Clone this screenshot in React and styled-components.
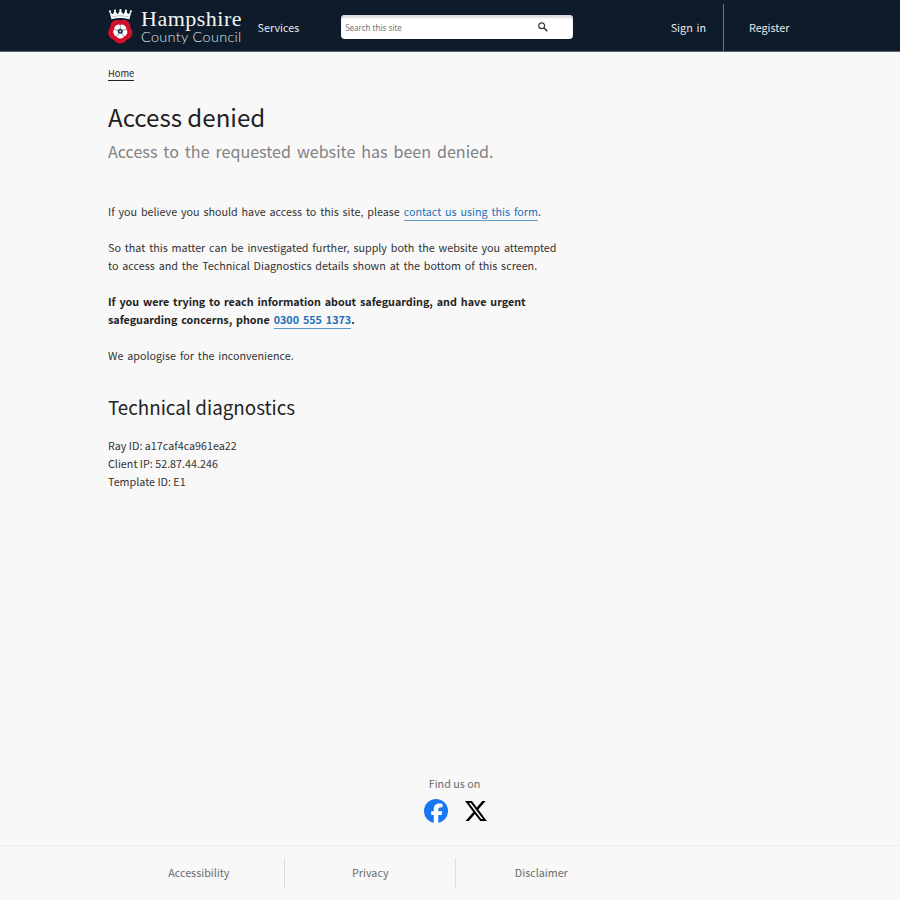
import React from 'react';
import styled, { createGlobalStyle } from 'styled-components';

const GlobalStyle = createGlobalStyle`
  *, *::before, *::after {
    box-sizing: border-box;
  }

  body {
    margin: 0;
    background: #f8f8f8;
    color: #333;
    font-family: 'Noto Sans CJK JP', 'Noto Sans', sans-serif;
    font-size: 10.75px;
    line-height: 18px;
  }

  a {
    color: inherit;
    text-decoration: none;
  }
`;

const Page = styled.div`
  display: flex;
  flex-direction: column;
  height: 900px;
`;

const Header = styled.header`
  display: flex;
  height: 52px;
  padding: 4px 85px 0 108px;
  background: #0e1b2a;
  border-bottom: 1px solid #55606b;
  color: #e8eaec;
`;

const Brand = styled.a`
  display: flex;
  width: 149.6px;
  padding-top: 5px;

  svg {
    display: block;
    width: 25px;
    height: 36px;
    margin-right: 8px;
  }
`;

const BrandName = styled.span`
  display: flex;
  flex-direction: column;
  white-space: nowrap;
`;

const BrandTop = styled.span`
  font-family: 'Liberation Serif', serif;
  font-size: 22px;
  line-height: 20px;
  letter-spacing: 0.5px;
  color: #f4f4f4;
`;

const BrandBottom = styled.span`
  font-family: Lato, sans-serif;
  font-weight: 300;
  font-size: 14.5px;
  line-height: 15px;
  letter-spacing: 0.3px;
  color: #dfe3e6;
`;

const NavLink = styled.a`
  padding-top: 15px;
  line-height: 18px;
  word-spacing: 1.4px;
`;

const Search = styled.form`
  display: flex;
  align-items: center;
  width: 232px;
  height: 24px;
  margin: 11px 0 0 42px;
  padding: 0 25px 0 4px;
  background: #fff;
  border-radius: 4px;
  box-shadow: inset 0 3px 2px #dfdbe0;

  input {
    flex: 1;
    min-width: 0;
    padding: 0;
    border: 0;
    outline: 0;
    background: transparent;
    font-family: 'Noto Sans', sans-serif;
    font-size: 8px;
  }

  input::placeholder {
    color: #757575;
  }
`;

const Account = styled.div`
  display: flex;
  margin-left: auto;

  a {
    padding: 15px 25.6px 0 25px;
  }

  a:first-child {
    padding-right: 17px;
    border-right: 1px solid #6e7780;
  }
`;

const Main = styled.main`
  flex: 1;
  padding: 12px 108px 0;
`;

const Crumb = styled.a`
  display: block;
  width: fit-content;
  height: 17px;
  font-size: 9.3px;
  color: #222;
  border-bottom: 1px solid #222;
`;

const Title = styled.h1`
  margin: 18px 0 0;
  font-size: 24.1px;
  font-weight: 400;
  line-height: 36px;
  color: #222;
`;

const Lead = styled.p`
  margin: 2px 0 38px;
  font-size: 16.1px;
  line-height: 28px;
  word-spacing: 2.3px;
  color: #828282;
`;

const Text = styled.p`
  width: 460px;
  margin: 0 0 18px;
  font-weight: ${(p) => (p.$strong ? 700 : 400)};
  color: ${(p) => (p.$strong ? '#222' : '#333')};
  word-spacing: 1.45px;
  white-space: nowrap;
`;

const TextLink = styled.a`
  && {
    color: #1d70b8;
  }
  padding-bottom: 1px;
  border-bottom: 1px solid #5a9bca;
`;

const Subtitle = styled.h2`
  margin: 26px 0 14px;
  font-size: 18.8px;
  font-weight: 400;
  line-height: 32px;
  color: #222;
`;

const Social = styled.section`
  display: flex;
  flex-direction: column;
  align-items: center;
  height: 70px;
  padding-left: 9px;
  color: #6b6b6b;
`;

const SocialLinks = styled.div`
  display: flex;
  align-items: center;
  gap: 17px;
  margin: 6px 0 0 2px;

  svg {
    display: block;
  }
`;

const Footer = styled.footer`
  display: flex;
  height: 55px;
  padding: 12px 0 12px 113.3px;
  border-top: 1px solid #ebebeb;
`;

const FooterLink = styled.a`
  display: flex;
  align-items: center;
  justify-content: center;
  width: 171px;
  color: #6b6b6b;

  & + & {
    border-left: 1px solid #dedede;
  }
`;

const petals = [0, 72, 144, 216, 288];

// Crowned rose emblem
const Rose = () => (
  <svg viewBox="0 0 25 36">
    <path
      d="M3.4 10.2 1.4 2.6l3.4 2.6 2-3.6 2.8 3.6L12.4 1l2.8 4.2 2.8-3.6 2 3.6 3.4-2.6-2 7.6q-9-2.4-18 0Z"
      fill="#fff"
    />
    <path d="M4.5 7.6q8-1.8 16 0" fill="none" stroke="#0e1b2a" strokeWidth="0.3" />
    <g fill="#fff">
      <circle cx="2" cy="2.3" r="1.1" />
      <circle cx="7" cy="1.7" r="1.1" />
      <circle cx="12.4" cy="1.2" r="1.1" />
      <circle cx="18" cy="1.7" r="1.1" />
      <circle cx="22.9" cy="2.3" r="1.1" />
    </g>
    <g transform="translate(12.3 22.3)">
      {petals.map((a) => (
        <circle key={a} r="7.2" cy="-5.1" fill="#d90f2c" transform={`rotate(${a + 36})`} />
      ))}
      <circle r="9" fill="none" stroke="#a30f2c" strokeWidth="0.6" />
      {petals.map((a) => (
        <circle key={a} r="3.9" cy="-3.2" fill="#fff" transform={`rotate(${a + 36})`} />
      ))}
      {petals.map((a) => (
        <path key={a} d="M0-2V-5.8" stroke="#5f7286" strokeWidth="0.7" transform={`rotate(${a})`} />
      ))}
      <circle r="2.5" fill="#1d3349" />
      <circle r="1" fill="#b6c2cc" />
    </g>
  </svg>
);

const SearchIcon = () => (
  <svg width="10" height="10" viewBox="0 0 10 10" fill="none" stroke="#333">
    <circle cx="3.7" cy="3.7" r="2.9" strokeWidth="1.2" />
    <path d="m5.8 5.8 3.5 3.5" strokeWidth="1.6" />
  </svg>
);

const Facebook = () => (
  <svg width="24" height="24" viewBox="0 0 24 24">
    <circle cx="12" cy="12" r="12" fill="#1877f2" />
    <path
      d="M9.8 23.9v-8H7.2v-3.6h2.6v-1.6c0-4.2 1.9-6.1 6-6.1.8 0 2.1.2 2.7.3v3.4l-1.4-.1c-2 0-2.8.8-2.8 2.8v1.3h4l-.7 3.6h-3.3v8a12 12 0 0 1-4.5 0Z"
      fill="#fff"
    />
  </svg>
);

const XLogo = () => (
  <svg width="22" height="20" viewBox="1.2 2.2 21.7 19.6" preserveAspectRatio="none">
    <path
      d="M18.24 2.25h3.31l-7.23 8.26 8.5 11.24H16.17l-5.21-6.82L4.99 21.75H1.68l7.73-8.84L1.25 2.25H8.08l4.71 6.23Zm-1.16 17.52h1.83L7.08 4.13H5.12Z"
      fill="#000"
    />
  </svg>
);

const App = () => {
  return (
    <Page>
      <GlobalStyle />
      <Header>
        <Brand href="#">
          <Rose />
          <BrandName>
            <BrandTop>Hampshire</BrandTop>
            <BrandBottom>County Council</BrandBottom>
          </BrandName>
        </Brand>
        <NavLink href="#">Services</NavLink>
        <Search>
          <input type="text" placeholder="Search this site" />
          <SearchIcon />
        </Search>
        <Account>
          <NavLink href="#">Sign in</NavLink>
          <NavLink href="#">Register</NavLink>
        </Account>
      </Header>

      <Main>
        <Crumb href="#">Home</Crumb>
        <Title>Access denied</Title>
        <Lead>Access to the requested website has been denied.</Lead>
        <Text>
          If you believe you should have access to this site, please{' '}
          <TextLink href="#">contact us using this form</TextLink>.
        </Text>
        <Text>
          So that this matter can be investigated further, supply both the website you attempted
          <br />
          to access and the Technical Diagnostics details shown at the bottom of this screen.
        </Text>
        <Text $strong>
          If you were trying to reach information about safeguarding, and have urgent
          <br />
          safeguarding concerns, phone <TextLink href="#">0300 555 1373</TextLink>.
        </Text>
        <Text>We apologise for the inconvenience.</Text>

        <Subtitle>Technical diagnostics</Subtitle>
        <div>Ray ID: a17caf4ca961ea22</div>
        <div>Client IP: 52.87.44.246</div>
        <div>Template ID: E1</div>
      </Main>

      <Social>
        <span>Find us on</span>
        <SocialLinks>
          <Facebook />
          <XLogo />
        </SocialLinks>
      </Social>

      <Footer>
        <FooterLink href="#">Accessibility</FooterLink>
        <FooterLink href="#">Privacy</FooterLink>
        <FooterLink href="#">Disclaimer</FooterLink>
      </Footer>
    </Page>
  );
};

export default App;
